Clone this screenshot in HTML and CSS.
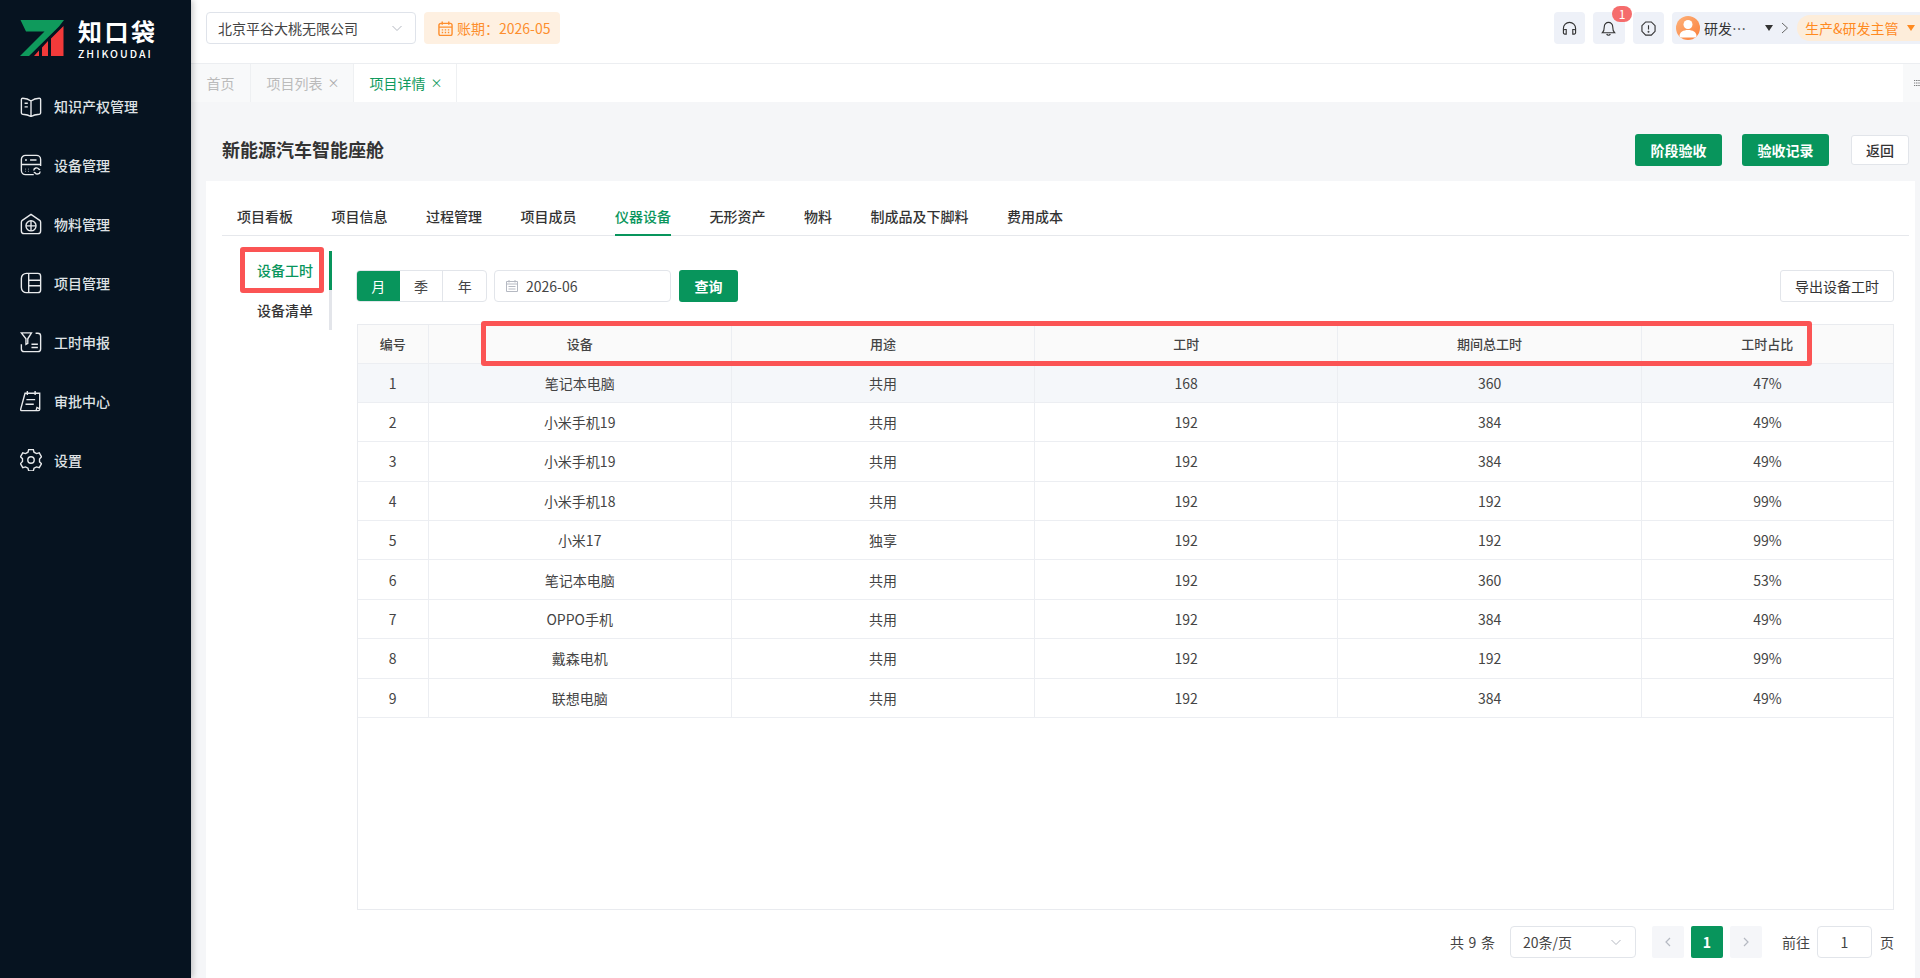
FILE: index.html
```html
<!DOCTYPE html>
<html lang="zh-CN">
<head>
<meta charset="utf-8">
<title>项目详情</title>
<link rel="stylesheet" href="styles.css">
</head>
<body>
<div class="app">
  <aside class="sidebar">
    <div class="logo">
      <svg class="logo-mark" width="44" height="36" viewBox="0 0 44 36">
        <path d="M0.500 0H44L39 6.500L9 36H0L24.500 11.500L6 11.500Z" fill="#0f9a5c"/>
        <path d="M14 36L19 30.500V36ZM22 36V27.500L28 21V36ZM31 36V18.500L43.500 6V36Z" fill="#f23a3a"/>
      </svg>
      <div class="logo-text">
        <div class="logo-cn">知口袋</div>
        <div class="logo-en">ZHIKOUDAI</div>
      </div>
    </div>
    <nav class="menu">
      <a class="menu-item"><svg class="mi" viewBox="0 0 24 24"><path d="M12 6.500C9.500 4.500 6 3.500 3 3.500c-1 0-1.500.5-1.500 1.500v14.500c0 1 .5 1.300 1.500 1.500 3 .3 6.500 1 9 2.500 2.500-1.500 6-2.200 9-2.500 1-.2 1.500-.5 1.500-1.500V5c0-1-.5-1.500-1.500-1.500-3 0-6.500 1-9 3Z M12 6.500V23 M5 9h3.500 M5 13h3.500"/></svg><span>知识产权管理</span></a>
      <a class="menu-item"><svg class="mi" viewBox="0 0 24 24"><path d="M15 22.500H6a4.500 4.500 0 0 1-4.500-4.500V6A4.500 4.500 0 0 1 6 1.500h12A4.500 4.500 0 0 1 22.500 6v7 M1.500 11.500h21 M5.500 6.500h2 M11 6.500h7 M5.500 16.500h.5 M9 16.500h.5 M5.500 19h.5 M9 19h.5 M15 18a3 3 0 0 1 5.500-1.500l1.500.5 M22 19a3 3 0 0 1-5.500 1.500l-1.500-.5"/></svg><span>设备管理</span></a>
      <a class="menu-item"><svg class="mi" viewBox="0 0 24 24"><path d="M12 1.500L2.500 8C1.800 8.500 1.500 9 1.500 10v9.500c0 2 1 3 3 3h15c2 0 3-1 3-3V10c0-1-.3-1.500-1-2Z"/><circle cx="12" cy="14" r="5.500"/><path d="M12 8.500v11 M6.500 14h11"/></svg><span>物料管理</span></a>
      <a class="menu-item"><svg class="mi" viewBox="0 0 24 24"><path d="M7 1.500h12.500a3 3 0 0 1 3 3v15a3 3 0 0 1-3 3H7a5.500 5.500 0 0 1-5.500-5.500V7A5.500 5.500 0 0 1 7 1.500Z M9.500 1.500v21 M9.500 9h13 M9.500 15h13"/></svg><span>项目管理</span></a>
      <a class="menu-item"><svg class="mi" viewBox="0 0 24 24"><path d="M17 2.500h2.500a3 3 0 0 1 3 3v14a3 3 0 0 1-3 3h-15a3 3 0 0 1-3-3v-5 M1.500 2h11L8.500 8.500v5l-2 1v-6Z M12.500 14.500h7 M12.500 18h7"/></svg><span>工时申报</span></a>
      <a class="menu-item"><svg class="mi" viewBox="0 0 24 24"><path d="M5.500 3.500h16v17.500a1.500 1.500 0 0 1-1.500 1.500H2c-1 0-1.500-.7-1.300-1.500Z M21.500 20.500l-3-1.500-1 3.500 M8 1v4.500 M16.500 1v4.500 M7 10.500h9.500 M6 15.500h9"/></svg><span>审批中心</span></a>
      <a class="menu-item"><svg class="mi" viewBox="0 0 24 24"><path d="M9.500 1.500h5l.8 3 2.700 1.500 3-.8 2.500 4.300-2.200 2.500v3l2.200 2-2.500 4.300-3-.8-2.700 1.500-.8 3h-5l-.8-3L6 20.500l-3 .8L.5 17l2.200-2.500v-3L.5 9.500 3 5.200l3 .8 2.700-1.500Z" transform="translate(0 -1)"/><circle cx="12" cy="12" r="3.500"/></svg><span>设置</span></a>
    </nav>
  </aside>

  <div class="main">
    <header class="topbar">
      <div class="company">
        <span>北京平谷大桃无限公司</span>
        <svg class="chev" viewBox="0 0 12 12"><path d="M1.500 4l4.500 4.500L10.500 4"/></svg>
      </div>
      <div class="period">
        <svg class="cal-o" viewBox="0 0 16 16"><path d="M1 4.500a2 2 0 0 1 2-2h10a2 2 0 0 1 2 2v9a2 2 0 0 1-2 2H3a2 2 0 0 1-2-2Z M1 6.500h14 M4.500 .5v3.500 M11.500 .5v3.500 M4 9.500h1.500 M7.200 9.500h1.500 M10.500 9.500H12 M4 12.300h1.500 M7.200 12.300h1.500 M10.500 12.300H12"/></svg>
        <span>账期：2026-05</span>
      </div>
      <div class="spacer"></div>
      <div class="top-right">
        <div class="icon-btn"><svg class="ti" viewBox="0 0 16 16"><path d="M1.500 11V8a6.500 6.500 0 0 1 13 0v3 M1.500 10.500a1.500 1.500 0 0 1 1.500-1.500h1.500v5H3a1.500 1.500 0 0 1-1.500-1.500Z M14.500 10.500A1.500 1.500 0 0 0 13 9h-1.500v5H13a1.500 1.500 0 0 0 1.500-1.500Z"/></svg></div>
        <div class="icon-btn bell"><svg class="ti" viewBox="0 0 16 16"><path d="M8 1.500a4.500 4.500 0 0 0-4.500 4.500c0 3.500-.5 5-2 6.500h13c-1.500-1.500-2-3-2-6.500A4.500 4.500 0 0 0 8 1.500Z M6 14a2.300 2.300 0 0 0 4 0"/></svg><span class="badge">1</span></div>
        <div class="icon-btn"><svg class="ti" viewBox="0 0 16 16"><path d="M5 1h6l4 4v6l-4 4H5l-4-4V5Z M8 4.500v4.500"/><circle cx="8" cy="11.500" r=".4"/></svg></div>
        <div class="user">
          <span class="avatar"><svg viewBox="0 0 24 24" width="24" height="24"><circle cx="12" cy="8.500" r="4.500" fill="#fff"/><path d="M3.500 20c0-4 4-6 8.500-6s8.500 2 8.500 6c0 1-.5 1.500-1.500 1.500H5c-1 0-1.500-.5-1.500-1.500Z" fill="#fff"/></svg></span>
          <span class="user-name">研发…</span>
          <span class="tri dark"></span>
          <svg class="sep" viewBox="0 0 8 12"><path d="M1 1l5.500 5L1 11"/></svg>
          <span class="role">生产&amp;研发主管<span class="tri orange"></span></span>
        </div>
      </div>
    </header>

    <div class="tabbar">
      <div class="tb home">首页</div>
      <div class="tb grey">项目列表<span class="x">×</span></div>
      <div class="tb active">项目详情<span class="x">×</span></div>
      <div class="spacer"></div>
      <div class="tb-more"><svg viewBox="0 0 12 14" width="12" height="14"><path d="M0 2h2.500 M4 2h3 M8.500 2h3 M0 7h2.500 M4 7h3 M8.500 7h3 M0 12h2.500 M4 12h3 M8.500 12h3" stroke="#555" stroke-width="1.500" fill="none"/></svg></div>
    </div>

    <div class="page">
      <div class="page-head">
        <h1>新能源汽车智能座舱</h1>
        <div class="head-actions">
          <button class="btn primary">阶段验收</button>
          <button class="btn primary">验收记录</button>
          <button class="btn plain back">返回</button>
        </div>
      </div>

      <section class="card">
        <div class="tabs">
          <a>项目看板</a><a>项目信息</a><a>过程管理</a><a>项目成员</a><a class="on">仪器设备</a><a>无形资产</a><a>物料</a><a>制成品及下脚料</a><a>费用成本</a>
        </div>
        <div class="body">
          <div class="vtabs">
            <a class="on">设备工时</a>
            <a>设备清单</a>
            <i class="mark mark-side"></i>
          </div>
          <div class="content">
            <div class="toolbar">
              <div class="seg"><span class="on">月</span><span>季</span><span>年</span></div>
              <div class="date">
                <svg class="cal-g" viewBox="0 0 14 14"><path d="M1.500 2.500h11v10h-11Z M1.500 5h11 M4 1v2.500 M10 1v2.500 M3.500 7.500h7 M3.500 10h7" /></svg>
                <span>2026-06</span>
              </div>
              <button class="btn primary query">查询</button>
              <div class="spacer"></div>
              <button class="btn plain export">导出设备工时</button>
            </div>
            <div class="table-box">
              <table>
                <colgroup><col class="c1"><col class="c2"><col class="c2"><col class="c2"><col class="c2"><col></colgroup>
                <thead><tr><th>编号</th><th>设备</th><th>用途</th><th>工时</th><th>期间总工时</th><th>工时占比</th></tr></thead>
                <tbody>
                  <tr class="hover"><td>1</td><td>笔记本电脑</td><td>共用</td><td>168</td><td>360</td><td>47%</td></tr>
                  <tr><td>2</td><td>小米手机19</td><td>共用</td><td>192</td><td>384</td><td>49%</td></tr>
                  <tr><td>3</td><td>小米手机19</td><td>共用</td><td>192</td><td>384</td><td>49%</td></tr>
                  <tr><td>4</td><td>小米手机18</td><td>共用</td><td>192</td><td>192</td><td>99%</td></tr>
                  <tr><td>5</td><td>小米17</td><td>独享</td><td>192</td><td>192</td><td>99%</td></tr>
                  <tr><td>6</td><td>笔记本电脑</td><td>共用</td><td>192</td><td>360</td><td>53%</td></tr>
                  <tr><td>7</td><td>OPPO手机</td><td>共用</td><td>192</td><td>384</td><td>49%</td></tr>
                  <tr><td>8</td><td>戴森电机</td><td>共用</td><td>192</td><td>192</td><td>99%</td></tr>
                  <tr><td>9</td><td>联想电脑</td><td>共用</td><td>192</td><td>384</td><td>49%</td></tr>
                </tbody>
              </table>
              <i class="mark mark-head"></i>
            </div>
            <div class="pager">
              <span class="total">共 9 条</span>
              <div class="size"><span>20条/页</span><svg class="chev" viewBox="0 0 12 12"><path d="M1.500 4l4.500 4.500L10.500 4"/></svg></div>
              <span class="pg off"><svg viewBox="0 0 8 12"><path d="M6 2L2 6l4 4"/></svg></span>
              <span class="pg cur">1</span>
              <span class="pg off"><svg viewBox="0 0 8 12"><path d="M2 2l4 4-4 4"/></svg></span>
              <span class="goto">前往</span>
              <span class="jump">1</span>
              <span class="unit">页</span>
            </div>
          </div>
        </div>
      </section>
    </div>
  </div>
</div>
</body>
</html>
```
FILE: styles.css
```css
* { box-sizing: border-box; }
html, body { margin: 0; height: 100%; }
body {
  font-family: "Noto Sans CJK SC", "Noto Sans", sans-serif;
  font-size: 14px;
  color: #333;
  background: #fff;
  overflow: hidden;
}
.spacer { flex: 1; }
.app { display: flex; height: 978px; }

/* sidebar */
.sidebar {
  width: 191px;
  flex: none;
  background: #061320;
  color: #e6e8ea;
  box-shadow: 2px 0 6px rgba(0, 0, 0, .22);
  position: relative;
  z-index: 2;
}
.logo { display: flex; padding: 20px 0 0 20px; height: 76px; align-items: flex-start; }
.logo-mark { flex: none; }
.logo-text { margin-left: 14px; margin-top: -3px; color: #fff; }
.logo-cn { font-size: 24px; line-height: 28px; font-weight: 700; letter-spacing: 2.500px; }
.logo-en { font-size: 10.500px; line-height: 12px; letter-spacing: 2px; margin-top: 3px; font-weight: 500; }
.menu { display: flex; flex-direction: column; }
.menu-item { display: flex; align-items: center; height: 59px; padding-left: 20px; font-size: 14px; font-weight: 500; color: #dfe2e5; }
.mi { width: 22px; height: 22px; margin-right: 12px; fill: none; stroke: #e8eaec; stroke-width: 1.500; flex: none; }

/* top bar */
.main { flex: 1; min-width: 0; display: flex; flex-direction: column; }
.topbar { height: 64px; flex: none; display: flex; align-items: flex-start; padding: 12px 0 0 15px; border-bottom: 1px solid #eceef1; background: #fff; }
.company { width: 210px; height: 32px; border: 1px solid #dfe3ea; border-radius: 4px; display: flex; align-items: center; justify-content: space-between; padding: 0 12px 0 11px; font-size: 14px; color: #444; }
.chev { width: 12px; height: 12px; fill: none; stroke: #b5b9c2; stroke-width: 1; }
.period { margin-left: 8px; width: 136px; height: 32px; background: #fef0e1; border-radius: 4px; display: flex; align-items: center; padding-left: 14px; color: #fd8e2d; font-size: 14px; }
.cal-o { width: 15px; height: 15px; fill: none; stroke: #fd8e2d; stroke-width: 1.500; margin-right: 4px; }
.top-right { display: flex; align-items: center; gap: 8px; }
.icon-btn { position: relative; width: 31.500px; height: 32px; border-radius: 4px; background: #eef1f8; display: flex; align-items: center; justify-content: center; }
.ti { width: 15px; height: 15px; fill: none; stroke: #333; stroke-width: 1.200; }
.badge { position: absolute; top: -6px; left: 19px; width: 20px; height: 16px; border-radius: 8px; background: #f56c6c; color: #fff; font-size: 12px; line-height: 16px; text-align: center; }
.user { width: 248px; height: 32px; border-radius: 4px 0 0 4px; background: #eef1f8; display: flex; align-items: center; padding-left: 4px; font-size: 14px; color: #333; }
.avatar { width: 24px; height: 24px; border-radius: 50%; background: linear-gradient(135deg, #fdb27b, #fb7f3a); overflow: hidden; flex: none; }
.user-name { width: 59px; margin-left: 4px; }
.tri { display: inline-block; width: 0; height: 0; border-left: 4.500px solid transparent; border-right: 4.500px solid transparent; }
.tri.dark { border-top: 6px solid #333; margin-left: 2px; }
.tri.orange { border-top: 6px solid #ff8a1f; margin-left: 8px; }
.sep { width: 8px; height: 12px; margin-left: 8px; fill: none; stroke: #666; stroke-width: 1; }
.role { flex: 1; margin-left: 8px; height: 26px; border-radius: 13px 0 0 13px; background: #fdedda; color: #ff8a1f; display: flex; align-items: center; padding-left: 8px; white-space: nowrap; }

/* tab bar */
.tabbar { height: 38px; flex: none; display: flex; background: #fff; color: #bbb; }
.tb { height: 38px; display: flex; align-items: center; justify-content: center; font-size: 14px; background: #f8f9fa; border-right: 1px solid #eef0f2; }
.tb.home { width: 60px; }
.tb.grey { width: 103px; padding-left: 2px; }
.tb.active { width: 103px; background: #fff; color: #0f9a5c; padding-left: 2px; }
.x { font-size: 12px; margin-left: 5px; line-height: 1; }
.tb.grey .x { color: #aaa; }
.tb-more { width: 17px; background: #f8f9fa; display: flex; align-items: center; padding-left: 11px; overflow: hidden; }

/* page */
.page { flex: 1; min-height: 0; background: #f5f6f8; padding: 0 5px 0 15px; display: flex; flex-direction: column; }
.page-head { height: 79px; flex: none; display: flex; align-items: center; justify-content: space-between; padding: 16px 6px 0 16px; }
.page-head h1 { margin: -2px 0 0; font-size: 18px; font-weight: 700; color: #333; line-height: 1; }
.head-actions { display: flex; gap: 20px; align-items: center; }
.btn { font-family: inherit; font-size: 14px; height: 32px; border-radius: 3px; cursor: pointer; padding: 0; font-weight: 500; }
.btn.primary { background: #08955c; color: #fff; border: none; width: 87px; font-weight: 700; }
.btn.plain { background: #fff; color: #333; border: 1px solid #e2e5ea; }
.btn.back { width: 58px; height: 30px; margin-left: 2px; }

/* card */
.card { flex: 1; min-height: 0; background: #fff; padding: 17px 6px 0 16px; display: flex; flex-direction: column; }
.tabs { display: flex; height: 38px; flex: none; border-bottom: 1px solid #e6e8ec; padding-left: 15px; gap: 38.500px; font-weight: 500; }
.tabs a { height: 38px; line-height: 37px; font-size: 14px; color: #333; }
.tabs a.on { color: #08955c; border-bottom: 2px solid #08955c; }
.body { display: flex; flex: 1; min-height: 0; }
.vtabs { position: relative; width: 110px; margin-top: 15px; height: 79px; flex: none; border-right: 3px solid transparent; padding-left: 35px; font-weight: 500; }
.vtabs::after { content: ""; position: absolute; right: -3px; top: 0; bottom: 0; width: 3px; background: linear-gradient(#08955c 0, #08955c 39px, #e3e5ea 39px); }
.vtabs a { display: block; height: 39.500px; line-height: 39px; font-size: 14px; color: #333; white-space: nowrap; }
.vtabs a.on { color: #08955c; }
.content { flex: 1; min-width: 0; padding-left: 25px; margin-right: 15px; display: flex; flex-direction: column; }
.toolbar { display: flex; align-items: center; height: 32px; margin-top: 34px; flex: none; }
.seg { display: flex; width: 131px; height: 32px; margin-left: -1px; border: 1px solid #e2e5ea; border-radius: 4px; overflow: hidden; }
.seg span { flex: 1; display: flex; align-items: center; justify-content: center; border-right: 1px solid #e2e5ea; color: #444; }
.seg span:last-child { border-right: none; }
.seg span.on { background: #08955c; color: #fff; border-right: none; }
.date { margin-left: 7px; width: 177px; height: 32px; border: 1px solid #e2e5ea; border-radius: 4px; display: flex; align-items: center; padding-left: 10px; color: #444; }
.cal-g { width: 14px; height: 14px; fill: none; stroke: #b5b9c2; stroke-width: 1; margin-right: 7px; }
.btn.query { margin-left: 8px; width: 59px; }
.btn.export { width: 114px; font-weight: 400; }

/* table */
.table-box { position: relative; margin-top: 22px; height: 586px; flex: none; border: 1px solid #e9ebef; }
table { width: 100%; table-layout: fixed; border-collapse: collapse; font-size: 14px; color: #444; }
.c1 { width: 70px; }
.c2 { width: 303.300px; }
th, td { text-align: center; padding: 0; border-right: 1px solid #eceef2; border-bottom: 1px solid #eceef2; height: 39.400px; }
th:last-child, td:last-child { border-right: none; }
th { background: #fafafa; font-size: 13px; font-weight: 500; color: #444; height: 38px; }
tr.hover td { background: #f5f7fa; }
.mark { position: absolute; border: 5px solid #fb5454; border-radius: 3px; pointer-events: none; }
.mark-side { left: 18px; top: -4px; width: 84px; height: 46px; }
.mark-head { left: 123px; top: -4px; width: 1331px; height: 45px; }

/* pager */
.pager { display: flex; align-items: center; height: 32px; margin-top: 16px; font-size: 14px; color: #444; flex: none; }
.total { margin-left: auto; word-spacing: 1.500px; }
.size { margin-left: 15px; width: 126px; height: 32px; border: 1px solid #e2e5ea; border-radius: 4px; display: flex; align-items: center; justify-content: space-between; padding: 0 13px 0 12px; }
.pg { width: 32px; height: 32px; border-radius: 2px; display: flex; align-items: center; justify-content: center; margin-left: 7px; background: #f5f6f9; }
.pg svg { width: 8px; height: 12px; fill: none; stroke: #b5b9c2; stroke-width: 1.200; }
.size + .pg { margin-left: 16px; }
.pg.cur { background: #08955c; color: #fff; font-weight: 700; }
.goto { margin-left: 20px; }
.jump { margin-left: 7px; width: 55px; height: 32px; border: 1px solid #e2e5ea; border-radius: 4px; display: flex; align-items: center; justify-content: center; }
.unit { margin-left: 8px; }
```
